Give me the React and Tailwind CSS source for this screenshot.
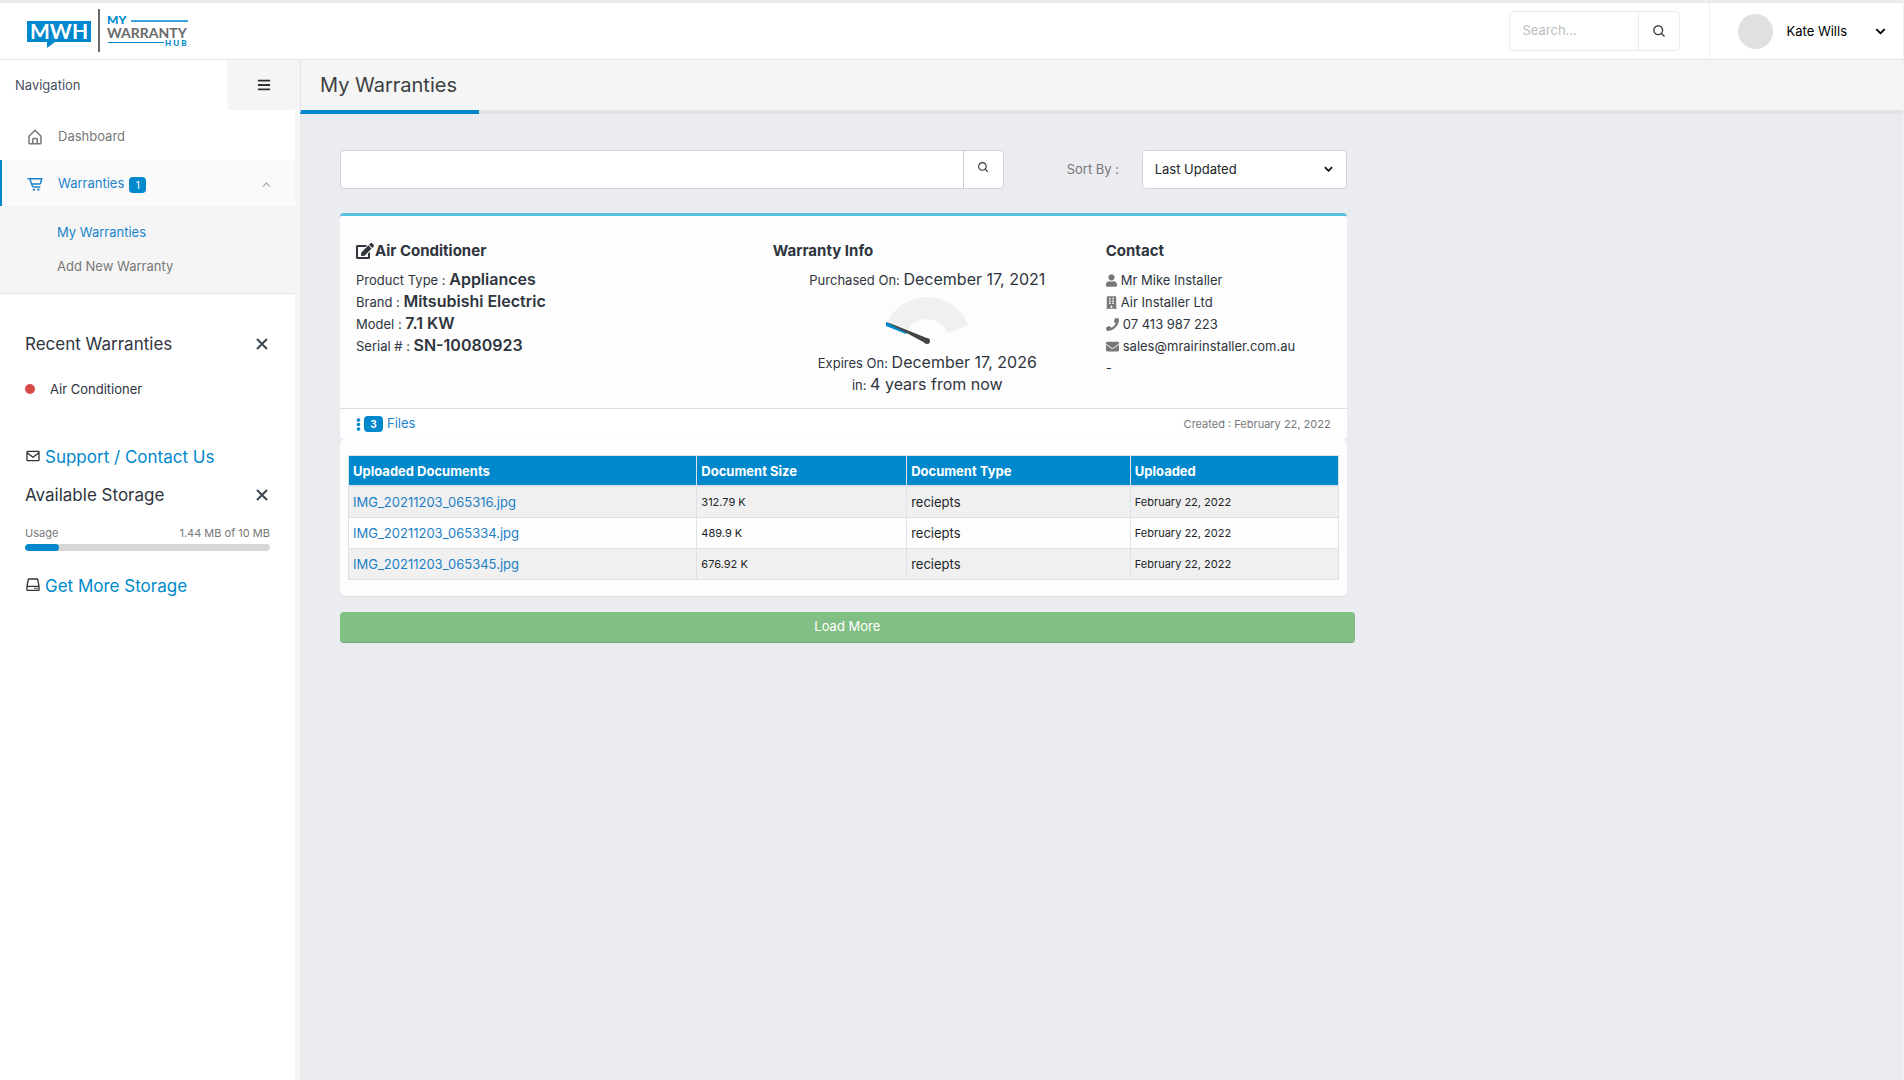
import React from "react";
import { BiHomeAlt, BiCartAlt, BiEnvelope, BiHdd, BiSearch } from "react-icons/bi";
import {
  FaBars,
  FaBuilding,
  FaChevronDown,
  FaChevronUp,
  FaEdit,
  FaEllipsisV,
  FaEnvelope,
  FaPhone,
  FaUser,
} from "react-icons/fa";

const documents = [
  { name: "IMG_20211203_065316.jpg", size: "312.79 K", type: "reciepts", date: "February 22, 2022" },
  { name: "IMG_20211203_065334.jpg", size: "489.9 K", type: "reciepts", date: "February 22, 2022" },
  { name: "IMG_20211203_065345.jpg", size: "676.92 K", type: "reciepts", date: "February 22, 2022" },
];

function Logo() {
  return (
    <svg viewBox="0 0 164 46" className="h-[46px] w-[164px]" role="img" aria-label="My Warranty Hub">
      <path d="M1 13h64v21H29l-8 6v-6H1z" fill="#0088cc" />
      <text x="4" y="31" fontFamily="Lato, sans-serif" fontWeight="700" fontSize="21" fill="#fff">MWH</text>
      <rect x="72" y="1" width="2" height="43" fill="#6a6a6a" />
      <text x="81" y="16" fontFamily="Lato, sans-serif" fontWeight="900" fontSize="12" fill="#0088cc">MY</text>
      <rect x="105" y="12" width="57" height="2" fill="#3ba6dc" />
      <text x="81" y="30" fontFamily="Lato, sans-serif" fontWeight="700" fontSize="14" fill="#6a6a6a">WARRANTY</text>
      <rect x="82" y="34" width="56" height="1" fill="#0088cc" />
      <text x="139" y="38" fontFamily="Lato, sans-serif" fontWeight="900" fontSize="8" letterSpacing="2" fill="#0088cc">HUB</text>
    </svg>
  );
}

function Gauge() {
  return (
    <svg viewBox="0 0 90 50" className="h-[50px] w-[90px]" role="img" aria-label="Warranty time used">
      <path d="M4 28A44 44 0 0 1 86 28L65.500 36A22 22 0 0 0 24.500 36Z" fill="#f0f0f0" />
      <path d="M4 25L4 29L24 37L26 34Z" fill="#0088cc" />
      <path d="M3.500 24.500L46 41.500L44 46.500Z" fill="#444" />
      <circle cx="45" cy="44" r="3" fill="#444" />
    </svg>
  );
}

function Close({ label }) {
  return (
    <button aria-label={label} className="flex size-4 items-center justify-center text-[#3c4650]">
      <svg viewBox="0 0 12 12" className="size-3" stroke="currentColor" strokeWidth="2">
        <path d="M1 1L11 11M11 1L1 11" />
      </svg>
    </button>
  );
}

function Header() {
  return (
    <header className="flex h-[60px] items-stretch border-t-3 border-b border-t-[#ececec] border-b-[#e3e3e3] bg-white">
      <a href="#home" className="ml-[26px] flex items-center">
        <Logo />
      </a>
      <form className="mr-[29px] ml-auto flex h-10 self-center rounded border border-[#ececec]">
        <input
          aria-label="Search"
          placeholder="Search..."
          className="w-32 rounded-l px-3 text-[13px] text-[#333] outline-none placeholder:text-[#bdbdbd]"
        />
        <button type="button" aria-label="Search" className="flex w-[41px] items-center justify-center border-l border-[#ececec] text-[#333]">
          <BiSearch className="size-[15px]" />
        </button>
      </form>
      <button className="flex items-center border-l border-[#eeeeee] pr-[17px] pl-7">
        <span className="size-[35px] rounded-full bg-[#e0e0e0]" />
        <span className="ml-[13px] text-[13px] leading-5 text-black">Kate Wills</span>
        <FaChevronDown className="ml-7 size-[11px] text-black" />
      </button>
    </header>
  );
}

function Sidebar() {
  return (
    <aside className="w-[300px] shrink-0 border-r-5 border-[#f5f5f5] bg-white text-[13px]">
      <div className="flex h-[50px] items-center pl-[15px]">
        <span className="pt-0.5 text-[#465162]">Navigation</span>
        <button aria-label="Toggle menu" className="-mr-[5px] ml-auto flex h-full w-[73px] items-center justify-center rounded-bl bg-[#f5f5f5] text-[#333]">
          <FaBars className="size-[14px]" />
        </button>
      </div>
      <nav>
        <a href="#dashboard" className="flex h-[50px] items-center pt-1 pl-[26px] text-[#777]">
          <BiHomeAlt className="size-[18px]" />
          <span className="ml-[14px]">Dashboard</span>
        </a>
        <a href="#warranties" className="flex h-[46px] items-center border-l-2 border-[#0088cc] bg-[#fafafa] pt-0.5 pr-6 pl-6 text-[#1c84cc]">
          <BiCartAlt className="size-[18px]" />
          <span className="ml-[14px]">Warranties</span>
          <span className="mt-0.5 ml-[5px] flex h-4 w-[17px] items-center justify-center rounded bg-[#0088cc] text-[10px] text-white">1</span>
          <FaChevronUp className="ml-auto size-[9px] text-[#abb4be]" />
        </a>
        <div className="flex flex-col border-b border-[#e6e6e6] bg-[#f5f5f5] pt-[9px] pb-[10px] pl-[57px]">
          <a href="#my-warranties" className="leading-[34px] text-[#1c84cc]">My Warranties</a>
          <a href="#add-warranty" className="leading-[34px] text-[#777]">Add New Warranty</a>
        </div>
      </nav>
      <div className="pt-[38px] pr-[25px] pl-[25px]">
        <div className="flex items-center justify-between">
          <h2 className="text-[17px] leading-6 text-[#2f353e]">Recent Warranties</h2>
          <Close label="Close recent warranties" />
        </div>
        <a href="#air-conditioner" className="mt-[23px] flex items-center leading-5 text-[#2f353e]">
          <span className="mr-[15px] size-[10px] rounded-full bg-[#d64a4a]" />
          Air Conditioner
        </a>
        <a href="#support" className="mt-[46px] flex items-center text-[17px] leading-6 text-[#0088cc]">
          <BiEnvelope className="mr-1 mb-[3px] size-4 text-[#333]" />
          Support / Contact Us
        </a>
        <div className="mt-[14px] flex items-center justify-between">
          <h2 className="text-[17px] leading-6 text-[#2f353e]">Available Storage</h2>
          <Close label="Close available storage" />
        </div>
        <div className="mt-[18px] flex justify-between text-[11px] leading-4 text-[#777]">
          <span>Usage</span>
          <span>1.44 MB of 10 MB</span>
        </div>
        <div className="mt-[3px] h-[7px] overflow-hidden rounded-full bg-[#d6d6d6]">
          <div className="h-full w-[14%] rounded-full bg-[#0088cc]" />
        </div>
        <a href="#storage" className="mt-[23px] flex items-center text-[17px] leading-6 text-[#0088cc]">
          <BiHdd className="mr-1 mb-[3px] size-4 text-[#333]" />
          Get More Storage
        </a>
      </div>
    </aside>
  );
}

function Toolbar() {
  return (
    <div className="mr-2 flex items-center">
      <form className="flex h-[39px] flex-1 rounded border border-[#ced4da] bg-white">
        <input aria-label="Search warranties" className="min-w-0 flex-1 rounded-l px-3 text-[13px] outline-none" />
        <button type="button" aria-label="Search warranties" className="flex w-10 items-center justify-center border-l border-[#ccc] pb-1 text-[#333]">
          <BiSearch className="size-[13px]" />
        </button>
      </form>
      <label htmlFor="sort" className="ml-[63px] w-[75px] text-[13px] text-[#777]">Sort By :</label>
      <div className="relative">
        <select id="sort" defaultValue="updated" className="h-[39px] w-[205px] appearance-none rounded border border-[#ced4da] bg-white px-3 text-[13px] text-[#212529]">
          <option value="updated">Last Updated</option>
        </select>
        <svg viewBox="0 0 10 6" className="pointer-events-none absolute top-4 right-[14px] h-[6px] w-[9px]" fill="none" stroke="#111" strokeWidth="2">
          <path d="M1 1l4 4 4-4" />
        </svg>
      </div>
    </div>
  );
}

function Detail({ label, value, bold }) {
  return (
    <p className="leading-[22px]">
      {label} <span className={bold ? "text-base leading-none font-semibold" : "text-base leading-none"}>{value}</span>
    </p>
  );
}

function WarrantyCard() {
  return (
    <section className="mt-6 mr-2">
      <div className="rounded border-t-3 border-[#5bc0de] bg-white">
        <div className="grid grid-cols-[417fr_333fr_241fr] rounded-t border-b border-[#dddddd] bg-[#fdfdfd] pt-[23px] pb-3 pl-4 text-[13px] text-[#2f353e]">
          <div>
            <h3 className="mb-[6px] flex items-center text-[15px] leading-6 font-bold">
              <FaEdit className="mr-px size-[18px]" />
              Air Conditioner
            </h3>
            <Detail label="Product Type :" value="Appliances" bold />
            <Detail label="Brand :" value="Mitsubishi Electric" bold />
            <Detail label="Model :" value="7.1 KW" bold />
            <Detail label="Serial # :" value="SN-10080923" bold />
          </div>
          <div className="pr-6">
            <h3 className="mb-[6px] flex justify-between text-[15px] leading-6 font-bold">
              Warranty Info
              <span className="text-[11px] text-white">5 years</span>
            </h3>
            <div className="flex flex-col items-center">
              <Detail label="Purchased On:" value="December 17, 2021" />
              <div className="h-[61px] pt-[6px]">
                <Gauge />
              </div>
              <Detail label="Expires On:" value="December 17, 2026" />
              <Detail label="in:" value="4 years from now" />
            </div>
          </div>
          <div>
            <h3 className="mb-[6px] text-[15px] leading-6 font-bold">Contact</h3>
            <ul className="leading-[22px]">
              <li className="flex items-center"><FaUser className="mr-1 h-[13px] w-[11px] text-[#777]" />Mr Mike Installer</li>
              <li className="flex items-center"><FaBuilding className="mr-1 h-[13px] w-[11px] text-[#777]" />Air Installer Ltd</li>
              <li className="flex items-center"><FaPhone className="mr-1 size-[13px] text-[#777]" />07 413 987 223</li>
              <li className="flex items-center"><FaEnvelope className="mr-1 size-[13px] text-[#777]" />sales@mrairinstaller.com.au</li>
              <li>-</li>
            </ul>
          </div>
        </div>
        <div className="flex h-[30px] items-center justify-between px-4">
          <a href="#files" className="flex items-center text-[13px] text-[#1c84cc]">
            <FaEllipsisV className="h-[13px] w-[5px] text-[#0088cc]" />
            <span className="mr-1 ml-[3px] flex h-4 w-[19px] items-center justify-center rounded bg-[#0088cc] text-[10px] font-bold text-white">3</span>
            Files
          </a>
          <span className="text-[11px] text-[#777]">Created : February 22, 2022</span>
        </div>
      </div>
      <div className="rounded-md border-b border-[#dfe1e6] bg-[#fdfdfd] px-2 py-4">
        <table className="w-full table-fixed border-collapse text-left text-[13px] leading-[22px] text-[#212529]">
          <colgroup>
            <col className="w-[35.2%]" />
            <col className="w-[21.2%]" />
            <col className="w-[22.6%]" />
            <col />
          </colgroup>
          <thead>
            <tr className="bg-[#0088cc] text-white">
              {["Uploaded Documents", "Document Size", "Document Type", "Uploaded"].map((h) => (
                <th key={h} className="border border-b-2 border-[#dee2e6] px-1 pt-1 pb-[3px] font-bold">{h}</th>
              ))}
            </tr>
          </thead>
          <tbody>
            {documents.map((d) => (
              <tr key={d.name} className="odd:bg-[#f0f0f0]">
                <td className="border border-[#dee2e6] p-1"><a href="#document" className="text-[#1c7fc7]">{d.name}</a></td>
                <td className="border border-[#dee2e6] p-1 text-[11px]">{d.size}</td>
                <td className="border border-[#dee2e6] p-1">{d.type}</td>
                <td className="border border-[#dee2e6] p-1 text-[11px]">{d.date}</td>
              </tr>
            ))}
          </tbody>
        </table>
      </div>
    </section>
  );
}

export default function App() {
  return (
    <div className="flex min-h-screen flex-col bg-[#ebecf0] font-[Inter,sans-serif]">
      <div className="flex flex-1 flex-col border-r border-[#f1f1f3]">
        <Header />
        <div className="flex flex-1">
          <Sidebar />
          <main className="min-w-0 flex-1">
            <div className="flex h-[54px] border-b-4 border-[#e2e3e6] bg-[#f5f5f5]">
              <h1 className="-mb-1 flex items-center border-b-4 border-l border-b-[#0088cc] border-l-[#e2e3e6] pr-[22px] pl-[19px] text-xl text-[#3c3f42]">My Warranties</h1>
            </div>
            <div className="w-2/3 pt-9 pr-[14px] pl-10">
              <Toolbar />
              <WarrantyCard />
              <button className="mt-[15px] h-[31px] w-full rounded-sm border-b border-[#74a877] bg-[#82bf84] text-[13px] text-white">Load More</button>
            </div>
          </main>
        </div>
      </div>
    </div>
  );
}
